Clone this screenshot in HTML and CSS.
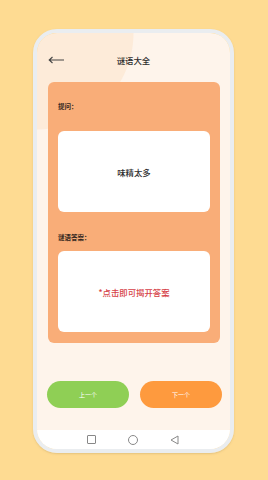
FILE: index.html
```html
<!DOCTYPE html>
<html lang="zh">
<head>
<meta charset="utf-8">
<title>谜语大全</title>
<link rel="stylesheet" href="styles.css">
</head>
<body>
<div class="phone">
  <div class="screen">
    <div class="header">
      <svg class="back" width="16" height="8" viewBox="0 0 16 8"><path d="M16 4H1.5M4.5 1L1.2 4L4.5 7" fill="none" stroke="#444" stroke-width="1.1"/></svg>
      <div class="title">谜语大全</div>
      <div class="spacer"></div>
    </div>
    <div class="card">
      <div class="label">提问：</div>
      <div class="box question">味精太多</div>
      <div class="label label2">谜语答案：</div>
      <div class="box answer">*点击即可揭开答案</div>
    </div>
    <div class="buttons">
      <div class="btn prev">上一个</div>
      <div class="btn next">下一个</div>
    </div>
    <div class="navbar">
      <span class="nav-square"></span>
      <span class="nav-circle"></span>
      <svg class="nav-back" width="9" height="10" viewBox="0 0 9 10"><path d="M1 5L8 1V9Z" fill="none" stroke="#888" stroke-width="1" stroke-linejoin="round"/></svg>
    </div>
  </div>
</div>
</body>
</html>
```
FILE: styles.css
```css
html, body {
  margin: 0;
  padding: 0;
}
body {
  width: 268px;
  height: 480px;
  background: #fedb92;
  font-family: "Noto Sans CJK SC", "Noto Sans", sans-serif;
  overflow: hidden;
}
.phone {
  margin: 29px 0 0 33px;
  width: 201px;
  height: 424px;
  box-sizing: border-box;
  border: 4px solid #eaedf0;
  border-radius: 24px;
  overflow: hidden;
  box-shadow: 0 1px 2px rgba(180, 150, 90, 0.35);
}
.screen {
  height: 100%;
  display: flex;
  flex-direction: column;
  background: radial-gradient(circle at 0 0, #fdebd9 96px, #fef4eb 97px);
}
.header {
  display: flex;
  align-items: center;
  height: 14px;
  padding: 20px 0 0 11px;
}
.back {
  width: 16px;
  display: block;
}
.title {
  flex: 1;
  text-align: center;
  font-size: 8.4px;
  font-weight: 500;
  color: #2e2e2e;
  line-height: 14px;
}
.spacer {
  width: 27px;
}
.card {
  margin: 15px 10px 0 11px;
  background: #f9ad78;
  border-radius: 6px;
  padding: 19px 10px 11px;
}
.label {
  font-size: 6.5px;
  font-weight: 700;
  color: #33261d;
  line-height: 10px;
}
.label2 {
  margin-top: 20px;
}
.box {
  background: #fff;
  border-radius: 6px;
  height: 81px;
  display: flex;
  align-items: center;
  justify-content: center;
  font-size: 8.4px;
  font-weight: 500;
}
.question {
  margin-top: 20px;
  color: #2e2e2e;
}
.answer {
  margin-top: 9px;
  color: #d63f47;
}
.buttons {
  display: flex;
  gap: 11px;
  padding-left: 10px;
  margin-top: 38px;
}
.btn {
  width: 82px;
  height: 27px;
  border-radius: 14px;
  display: flex;
  align-items: center;
  justify-content: center;
  font-size: 6px;
  color: #fff;
}
.prev {
  background: #8fcf55;
}
.next {
  background: #fe9a3e;
}
.navbar {
  margin-top: auto;
  height: 19px;
  background: #fff;
  display: flex;
  align-items: center;
  justify-content: center;
  gap: 32px;
  padding-right: 1px;
}
.nav-square {
  width: 7px;
  height: 7px;
  border: 1px solid #888;
  border-radius: 1px;
}
.nav-circle {
  width: 8px;
  height: 8px;
  border: 1px solid #888;
  border-radius: 50%;
}
.nav-back {
  display: block;
}
```
